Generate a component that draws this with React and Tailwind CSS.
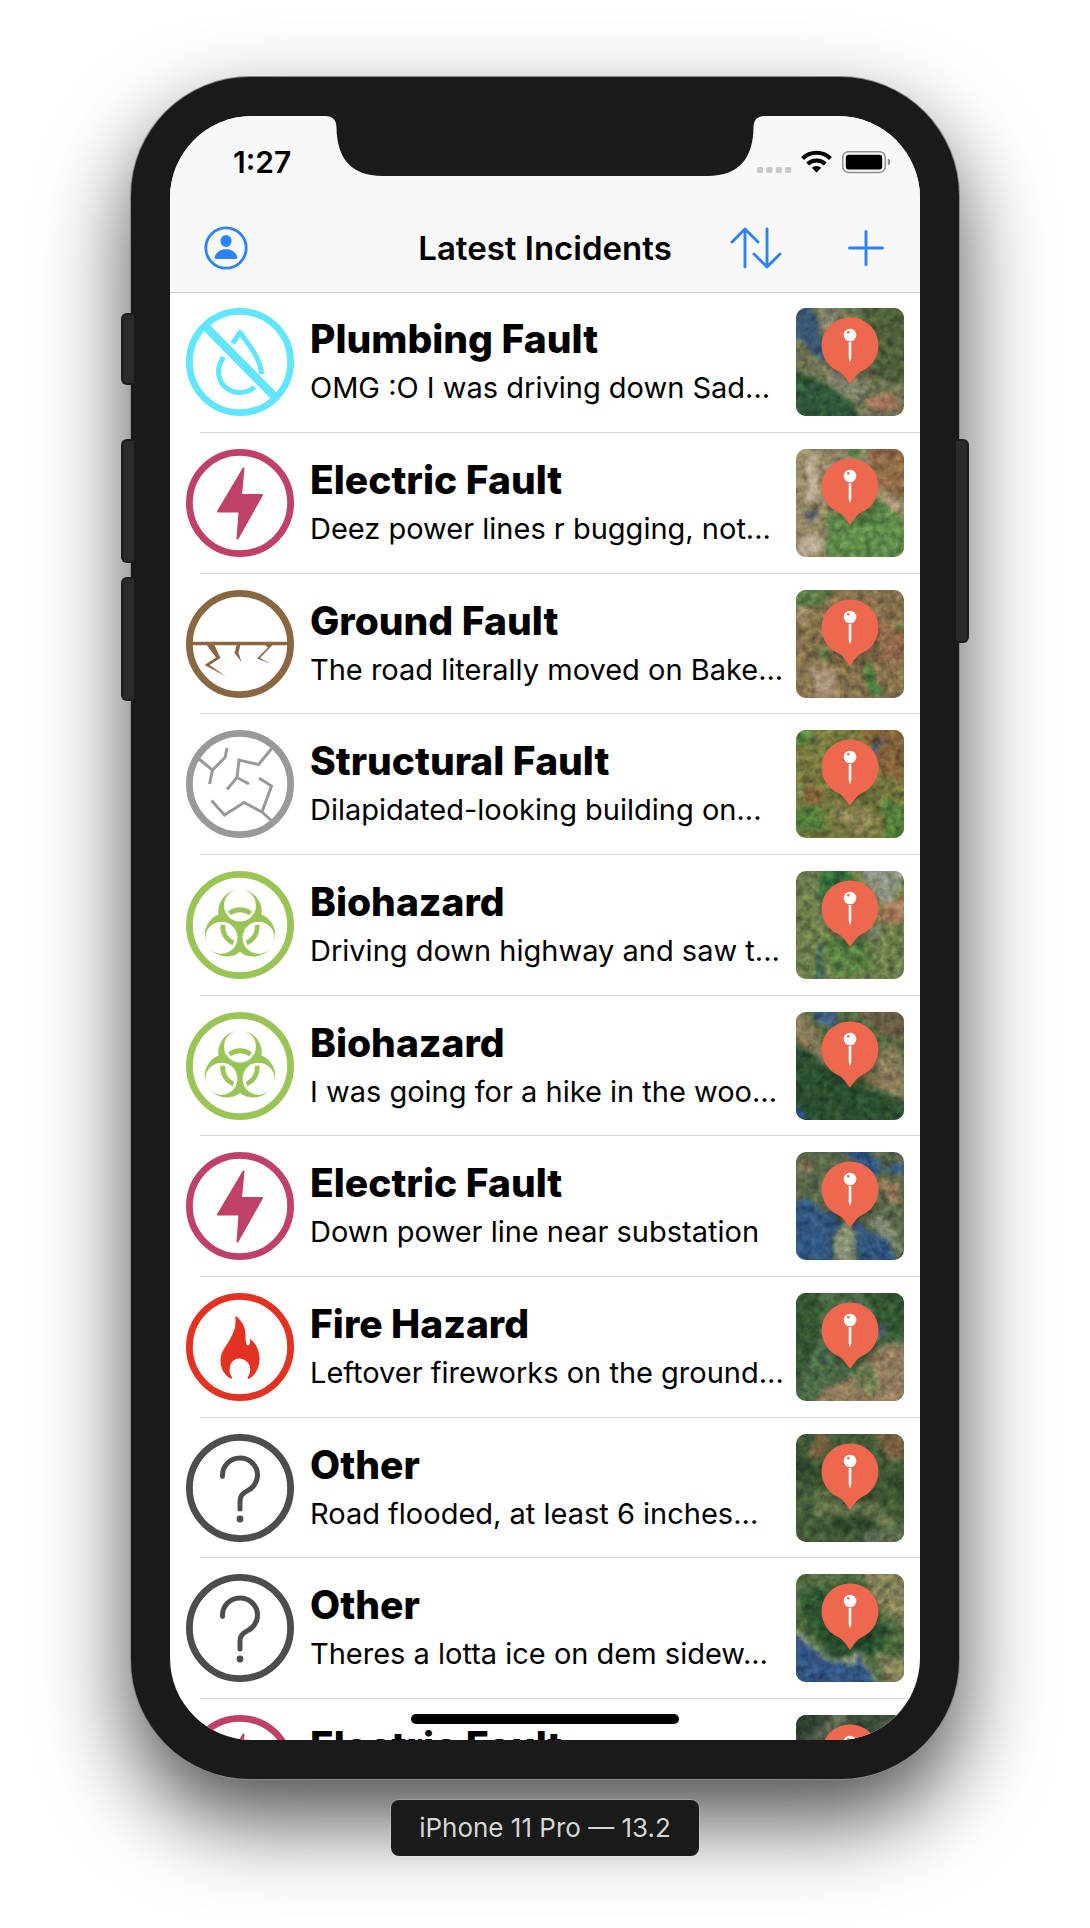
import React from "react";

function Ring({ color, children }) {
  return (
    <svg viewBox="0 0 108 108" className="size-[108px] shrink-0" aria-hidden="true">
      <circle cx="54" cy="54" r="50.6" fill="none" stroke={color} strokeWidth="6.8" />
      {children}
    </svg>
  );
}

function PlumbingIcon() {
  const c = "#62e5ff";
  return (
    <Ring color={c}>
      <g fill="none" stroke={c}>
        <path d="M19 18 L90 90" strokeWidth="8.5" />
        <path d="M46.5 35.5 L54 24.500 C64 38 75 52 75.500 66" strokeWidth="5" strokeLinejoin="round" />
        <path d="M37.500 49 C34.500 54 32.500 58 32.500 63 C32.500 76 42 84.500 54 84.500 C60 84.500 64.500 83 68.500 79" strokeWidth="5" />
      </g>
    </Ring>
  );
}

function ElectricIcon() {
  const c = "#bf4266";
  return (
    <Ring color={c}>
      <path
        d="M57.500 19.500 L55 46 H76 L51.500 89.500 L53.500 62.500 H32 Z"
        fill={c}
        stroke={c}
        strokeWidth="2"
        strokeLinejoin="round"
      />
    </Ring>
  );
}

function GroundIcon() {
  const c = "#8a6741";
  return (
    <Ring color={c}>
      <path d="M5 53.500 H103" stroke={c} strokeWidth="3.4" />
      <path
        fill={c}
        d="M20 54 H28 L34.500 68 L23.500 75 L40 86.500 L18.500 75 L30 67.500 Z M51 54 H54.500 L52.500 63 L55.500 72 L48.500 63 Z M78 54 H87.500 L74 68 L84 73.500 L71 68.500 L82 57.500 Z"
      />
    </Ring>
  );
}

function StructuralIcon() {
  const c = "#999999";
  return (
    <Ring color={c}>
      <path
        fill="none"
        stroke={c}
        strokeWidth="3"
        d="M13 29 L26.500 40 L23.500 54 M26.500 40 L39 27.500 L41 18 M87 17 L72.500 34.500 L53 30 L51 47.500 L41 59.500 M51 47.500 L63 54 M73 48 L85.500 56 L76 82 L58 72.500 L38.500 85 L25.500 70.500 M76 82 L87 92"
      />
    </Ring>
  );
}

function BiohazardIcon({ id }) {
  const c = "#9ac556";
  const turns = [0, 120, 240];
  return (
    <Ring color={c}>
      <mask id={id}>
        {turns.map((t) => (
          <circle key={t} cx="54" cy="40.500" r="21.800" fill="white" transform={`rotate(${t} 54 56)`} />
        ))}
        {turns.map((t) => (
          <g key={t} transform={`rotate(${t} 54 56)`}>
            <circle cx="54" cy="34.500" r="16" fill="black" />
            <path d="M54 14 V34" stroke="black" strokeWidth="4" />
          </g>
        ))}
      </mask>
      <rect x="10" y="10" width="88" height="88" fill={c} mask={`url(#${id})`} />
      {turns.map((t) => (
        <path
          key={t}
          d="M43.500 42.300 A17.300 17.300 0 0 1 64.500 42.300"
          fill="none"
          stroke={c}
          strokeWidth="4.8"
          transform={`rotate(${t} 54 56)`}
        />
      ))}
    </Ring>
  );
}

function FireIcon() {
  const c = "#e33122";
  return (
    <Ring color={c}>
      <path
        fill={c}
        d="M50.500 23.500 C56 28 59.500 34 59.600 43 C59.600 49 60 53 62 52.500 C64.500 52 64 49 64 46 C69 49 73.500 57 73.500 66 C73.500 75 69 83 62.500 86 C61 86 61.500 84.500 62.500 83 C64.500 80 65 74 62.500 70.500 C60 67 56.500 65.500 53 65.500 C49.500 65.500 46.500 67.500 45 70.500 C43 75 43 80 45.500 83.500 C46.500 85 46 86 44.500 85.500 C38 82 34.500 75 34.500 68 C34.500 59 39 55 43 48 C47 41 49.500 36 49.500 29 C49.500 26 49 22.500 50.500 23.500 Z"
      />
    </Ring>
  );
}

function OtherIcon() {
  const c = "#4d4d4d";
  return (
    <Ring color={c}>
      <path
        d="M36.500 42.500 C36 32 44 24 54 24 C64 24 71.500 32 71.500 41 C71.500 48 67 54.500 61 57 C56 59.500 54 63 54 67 V75"
        fill="none"
        stroke={c}
        strokeWidth="5"
        strokeLinecap="round"
      />
      <circle cx="54" cy="85" r="3.400" fill={c} />
    </Ring>
  );
}

const icons = {
  plumbing: PlumbingIcon,
  electric: ElectricIcon,
  ground: GroundIcon,
  structural: StructuralIcon,
  biohazard: BiohazardIcon,
  fire: FireIcon,
  other: OtherIcon,
};

const incidents = [
  {
    kind: "plumbing", title: "Plumbing Fault", text: "OMG :O I was driving down Sad...", base: "#69734f",
    land: [
      ["#36556f", "M-10 -10 H12 L32 45 L28 52 L12 40 L-10 20 Z"],
      ["#80846a", "M22 -8 H45 L36 30 L26 20 Z M20 55 L70 70 L66 96 L44 86 Z"],
      ["#2f5738", "M-10 60 L24 72 L52 92 L72 118 H-10 Z"],
      ["#4b5f38", "M60 -8 H118 V80 L84 70 Z"],
      ["#9a7157", "M70 90 L98 84 L104 104 L76 102 Z"],
    ],
  },
  {
    kind: "electric", title: "Electric Fault", text: "Deez power lines r bugging, not...", base: "#8f8761",
    land: [
      ["#bcb094", "M10 8 L22 6 L20 50 L12 54 Z M2 88 H26 V106 H4 Z"],
      ["#3f5568", "M12 62 L22 60 L18 74 L12 68 Z"],
      ["#5c8a48", "M30 66 L54 58 L80 46 L118 80 V118 H34 Z M52 -8 H64 V10 H52 Z"],
      ["#8a6a44", "M70 -8 H118 V54 L80 34 Z"],
      ["#b59a7c", "M86 44 L106 56 V66 L92 60 Z"],
    ],
  },
  {
    kind: "ground", title: "Ground Fault", text: "The road literally moved on Bake...", base: "#7f7049",
    land: [
      ["#567a40", "M-8 -8 H40 L30 12 L-8 22 Z M98 34 L118 32 V50 L98 46 Z M20 54 L36 66 L28 72 Z"],
      ["#aa977a", "M14 76 L36 78 L42 108 H20 Z M2 24 L14 20 L10 38 Z"],
      ["#3f7c3c", "M66 72 L78 80 L86 104 L76 106 L68 88 Z"],
      ["#8a6747", "M72 20 L118 50 V70 L86 74 Z"],
    ],
  },
  {
    kind: "structural", title: "Structural Fault", text: "Dilapidated-looking building on...", base: "#71783d",
    land: [
      ["#7d6138", "M60 -8 H118 V56 L84 44 Z M8 54 L28 60 L24 80 L8 70 Z"],
      ["#4b5367", "M72 18 L88 6 L86 16 L78 24 Z"],
      ["#4f7c37", "M-8 -8 H20 L16 14 L-8 20 Z M-8 78 L24 74 L30 98 L-8 104 Z M86 70 L118 74 V118 H90 Z"],
      ["#84814f", "M34 82 L70 76 L84 92 L60 104 Z"],
    ],
  },
  {
    kind: "biohazard", title: "Biohazard", text: "Driving down highway and saw t...", base: "#687d48",
    land: [
      ["#2f6a35", "M30 -8 H54 V22 L28 40 L22 20 Z"],
      ["#8b9580", "M56 -8 H118 L92 36 L80 26 Z M68 58 L84 54 L80 70 Z"],
      ["#a07c58", "M86 32 L118 22 V52 L82 52 Z"],
      ["#2f635c", "M22 72 H27 L26 106 H20 Z"],
      ["#537e40", "M28 66 L70 70 L78 98 L38 104 Z"],
    ],
  },
  {
    kind: "biohazard", title: "Biohazard", text: "I was going for a hike in the woo...", base: "#52663e",
    land: [
      ["#3d5d7d", "M10 -8 H42 L40 18 L28 16 Z"],
      ["#827a55", "M-8 6 L14 4 L34 44 L26 54 L-8 22 Z M62 60 L98 32 L118 70 V90 L82 78 Z"],
      ["#294e2d", "M-8 24 L46 66 L118 96 V118 H14 L-8 92 Z"],
      ["#655b42", "M56 -8 H118 V34 L84 22 Z"],
      ["#244a7c", "M-8 90 L10 104 L6 118 H-8 Z"],
    ],
  },
  {
    kind: "electric", title: "Electric Fault", text: "Down power line near substation", base: "#566647",
    land: [
      ["#2f567c", "M-8 54 L10 46 L28 62 L40 58 L46 72 L36 84 V118 H-8 Z M42 -8 H66 L88 18 L80 24 L60 12 Z M58 60 L70 80 L96 90 L100 118 H62 Z M90 14 L118 8 V22 H96 Z"],
      ["#7f8c70", "M40 74 L58 72 L58 118 H40 Z M70 66 L84 62 L104 88 L106 98 L84 84 Z"],
      ["#8f7b55", "M82 26 L102 30 L106 54 L94 54 Z M2 6 L16 10 L10 22 Z"],
    ],
  },
  {
    kind: "fire", title: "Fire Hazard", text: "Leftover fireworks on the ground...", base: "#476842",
    land: [
      ["#31562f", "M-8 -8 H26 L20 56 L-8 100 Z M66 -8 H118 V44 H86 Z"],
      ["#8e7c5b", "M58 84 L80 54 L118 50 V118 H12 L30 92 Z"],
      ["#41596b", "M24 60 L32 64 L30 70 Z M80 34 L92 32 L86 46 Z"],
      ["#6a7b4f", "M64 68 L82 76 V104 L56 92 Z"],
    ],
  },
  {
    kind: "other", title: "Other", text: "Road flooded, at least 6 inches...", base: "#405a35",
    land: [
      ["#74603d", "M20 -8 L34 4 L28 22 L14 26 Z M74 -8 H118 V22 L92 26 Z"],
      ["#5f7247", "M22 58 L72 62 L104 92 L100 100 L64 78 L16 84 Z"],
      ["#2d4729", "M-8 10 L16 30 L28 44 L-8 50 Z M34 84 L80 84 L82 94 L30 100 Z M84 40 L118 44 V80 Z"],
      ["#586c4c", "M70 96 L118 88 V118 H66 Z"],
    ],
  },
  {
    kind: "other", title: "Other", text: "Theres a lotta ice on dem sidew...", base: "#4c6a3d",
    land: [
      ["#2b542f", "M2 20 L30 14 L60 66 L82 46 L96 56 L84 84 L40 86 L12 56 Z"],
      ["#7d7f54", "M64 -8 H118 V60 L84 34 Z M78 80 L118 84 V118 H92 Z"],
      ["#8a9a7c", "M-8 48 L22 75 L40 87 L60 79 L68 81 L88 118 H60 L-8 66 Z"],
      ["#2f537b", "M-8 54 L20 78 L38 90 L54 90 L64 82 L86 118 H-8 Z"],
    ],
  },
  {
    kind: "electric", title: "Electric Fault", base: "#384b37",
    land: [
      ["#56634d", "M40 -8 L54 2 L40 20 L10 28 Z M80 8 L100 2 L108 18 Z"],
      ["#2b3f2d", "M-8 -8 H26 L16 18 L-8 20 Z"],
    ],
  },
];

function MapThumb({ base, land, index }) {
  const soft = `soft-${index}`;
  const grain = `grain-${index}`;
  return (
    <svg viewBox="0 0 108 108" className="isolate size-[108px] shrink-0 overflow-hidden rounded-[10px]" role="img" aria-label="Incident location">
      <defs>
        <filter id={soft} x="-20%" y="-20%" width="140%" height="140%" colorInterpolationFilters="sRGB">
          <feTurbulence type="fractalNoise" baseFrequency="0.080" numOctaves="2" seed={index + 3} result="n" />
          <feDisplacementMap in="SourceGraphic" in2="n" scale="10" xChannelSelector="R" yChannelSelector="G" />
          <feGaussianBlur stdDeviation="2" />
        </filter>
        <filter id={grain} x="0" y="0" width="100%" height="100%" colorInterpolationFilters="sRGB">
          <feTurbulence type="fractalNoise" baseFrequency="0.130" numOctaves="4" seed={index * 7 + 1} />
          <feColorMatrix values="1.300 0.700 0 0 -0.450  1.000 0.900 0 0 -0.450  0.900 0.700 0.400 0 -0.450  0 0 0 0 1" />
        </filter>
      </defs>
      <rect width="108" height="108" fill={base} />
      <g filter={`url(#${soft})`}>
        {land.map(([color, d], i) => (
          <path key={i} d={d} fill={color} />
        ))}
      </g>
      <rect width="108" height="108" filter={`url(#${grain})`} className="opacity-30 mix-blend-overlay" />
      <ellipse cx="58" cy="62" rx="24" ry="10" fill="#000" opacity="0.250" className="blur-[4px]" />
      <path
        d="M54 9.500 A28 28 0 0 1 66 63 C61 65.500 57.500 71 54.800 74.800 Q54 75.800 53.200 74.800 C50.500 71 47 65.500 42 63 A28 28 0 0 1 54 9.500 Z"
        fill="#ee6850"
      />
      <circle cx="54" cy="27" r="6.300" fill="#fff" />
      <circle cx="52.300" cy="24.200" r="1.300" fill="#ee6850" />
      <path d="M52.700 34 H55.300 V50 L54 54.500 L52.700 50 Z" fill="#fff" />
    </svg>
  );
}

function IncidentRow({ item, index }) {
  const Icon = icons[item.kind];
  return (
    <li className="relative flex h-[141px] items-start gap-4 px-4 pt-4 nth-[3n]:h-[140px]">
      <Icon id={`bio-${index}`} />
      <div className="min-w-0 flex-1 pt-2">
        <h2 className="text-[39px] leading-[46px] font-extrabold whitespace-nowrap">{item.title}</h2>
        {item.text && <p className="mt-2 text-[29px] leading-[36px] whitespace-nowrap">{item.text}</p>}
      </div>
      <MapThumb base={item.base} land={item.land} index={index} />
      <div className="absolute right-0 bottom-0 left-[30px] h-px bg-[#d9d9d9]" />
    </li>
  );
}

function StatusBar() {
  return (
    <div className="grid h-[88px] grid-cols-[1fr_440px_1fr] items-start">
      <time className="min-w-0 pt-7 pl-[63px] text-[30px] leading-9 font-semibold">1:27</time>
      <svg viewBox="0 0 440 60" className="h-[60px] w-[440px]" aria-hidden="true">
        <path
          d="M0 0 C8 0 11.500 4 11.500 12 C12 40 24 60 58 60 H382 C416 60 428 40 428.500 12 C428.500 4 432 0 440 0 Z"
          fill="#1a1a1a"
        />
      </svg>
      <div className="flex min-w-0 justify-end pt-[34px] pr-[29px]">
        <svg viewBox="0 0 134 24" className="relative h-6 w-[134px] shrink-0" aria-label="No signal, Wi-Fi on, battery full" role="img">
          <g fill="#c9c9c9">
            <rect x="0" y="17" width="6" height="6" rx="1.500" />
            <rect x="9.400" y="17" width="6" height="6" rx="1.500" />
            <rect x="18.800" y="17" width="6" height="6" rx="1.500" />
            <rect x="28.200" y="17" width="6" height="6" rx="1.500" />
          </g>
          <g fill="none" stroke="#000" strokeWidth="4">
            <path d="M45.500 8.500 A20 20 0 0 1 73.500 8.500" />
            <path d="M50.700 14 A12.500 12.500 0 0 1 68.300 14" />
          </g>
          <path d="M59.500 22.500 L54.800 17.800 A6.800 6.800 0 0 1 64.200 17.800 Z" fill="#000" />
          <rect x="85.800" y="1.800" width="42.400" height="20.600" rx="5.500" fill="none" stroke="#8e8e8e" strokeWidth="1.500" />
          <rect x="88.800" y="4.800" width="36.400" height="14.600" rx="3" fill="#000" />
          <path d="M130.800 8.500 C134 9.500 134 14.500 130.800 15.500 Z" fill="#8e8e8e" />
        </svg>
      </div>
    </div>
  );
}

function NavBar() {
  return (
    <div className="grid h-[88px] grid-cols-[1fr_auto_1fr] items-center px-[34px] text-[#2d82f8]">
      <button type="button" aria-label="Profile" className="size-11 justify-self-start">
        <svg viewBox="0 0 44 44" className="size-11" aria-hidden="true">
          <circle cx="22" cy="22" r="20.200" fill="none" stroke="currentColor" strokeWidth="2.800" />
          <ellipse cx="22" cy="15" rx="5.600" ry="6.100" fill="currentColor" />
          <path d="M10.700 31 C12 26 16.500 23.200 22 23.200 C27.500 23.200 32 26 33.300 31 Q33.600 33 31.800 33 H12.200 Q10.400 33 10.700 31 Z" fill="currentColor" />
        </svg>
      </button>
      <h1 className="text-[33px] leading-10 font-semibold whitespace-nowrap text-black">Latest Incidents</h1>
      <div className="flex items-center gap-16 justify-self-end">
        <button type="button" aria-label="Sort" className="h-11 w-[52px]">
          <svg viewBox="0 0 52 44" className="h-11 w-[52px]" fill="none" stroke="currentColor" strokeWidth="2.900" strokeLinecap="round" strokeLinejoin="round" aria-hidden="true">
            <path d="M15 41 V3 M2 16 L15 3 L28 16" />
            <path d="M37 3 V41 M24 28 L37 41 L50 28" />
          </svg>
        </button>
        <button type="button" aria-label="Add incident" className="size-10">
          <svg viewBox="0 0 40 40" className="size-10" fill="none" stroke="currentColor" strokeWidth="3" strokeLinecap="round" aria-hidden="true">
            <path d="M20 3.500 V36.500 M3.500 20 H36.500" />
          </svg>
        </button>
      </div>
    </div>
  );
}

export default function App() {
  return (
    <main className="flex min-h-screen flex-col items-center overflow-hidden bg-white px-4 pt-[77px] pb-[72px] font-['Inter','Liberation_Sans',sans-serif] text-black">
      <div className="relative w-full max-w-[828px]">
        <div className="rounded-[119px] bg-[#1a1a1a] p-[39px] shadow-[0_0_0_1px_#8c8c8c,0_40px_88px_rgba(0,0,0,0.7)]">
          <div className="relative aspect-[750/1624] overflow-hidden rounded-[82px] bg-white">
            <header className="h-[176px] bg-[#f8f8f8] shadow-[0_1px_0_#cfcfcf]">
              <StatusBar />
              <NavBar />
            </header>
            <ul>
              {incidents.map((item, i) => (
                <IncidentRow key={i} item={item} index={i} />
              ))}
            </ul>
            <div className="absolute inset-x-0 bottom-4 mx-auto h-[10px] w-[268px] rounded-full bg-black" />
          </div>
        </div>
        <div className="absolute top-[236px] -left-[10px] h-[72px] w-[13px] rounded-l-[6px] border-y-2 border-l-2 border-[#1c1c1c] bg-[#2b2b2b]" />
        <div className="absolute top-[362px] -left-[10px] h-[124px] w-[13px] rounded-l-[6px] border-y-2 border-l-2 border-[#1c1c1c] bg-[#2b2b2b]" />
        <div className="absolute top-[500px] -left-[10px] h-[124px] w-[13px] rounded-l-[6px] border-y-2 border-l-2 border-[#1c1c1c] bg-[#2b2b2b]" />
        <div className="absolute top-[362px] -right-[10px] h-[204px] w-[13px] rounded-r-[6px] border-y-2 border-r-2 border-[#1c1c1c] bg-[#2b2b2b]" />
      </div>
      <p className="relative mt-[21px] rounded-lg bg-[#1a1a1a] px-7 py-2.5 text-[26px] leading-9 text-[#d6d6d6] shadow-[0_0_0_1px_rgba(255,255,255,0.2)]">
        iPhone 11 Pro — 13.2
      </p>
    </main>
  );
}
